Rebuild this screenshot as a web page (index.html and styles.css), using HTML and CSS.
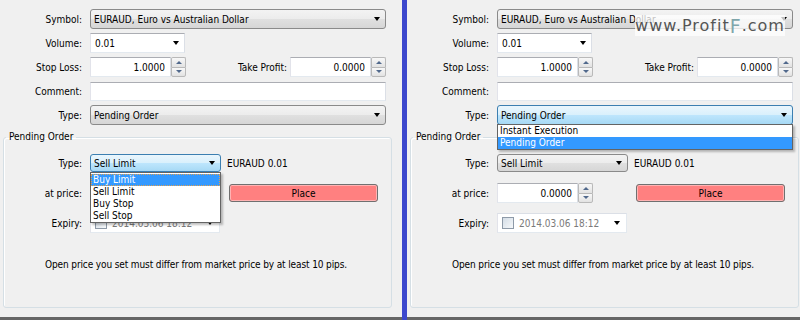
FILE: index.html
```html
<!DOCTYPE html>
<html lang="en">
<head>
    <meta charset="UTF-8">
    <title>Order</title>
    <link rel="stylesheet" href="styles.css">
</head>
<body>
    <div class="screen">
        <!-- left: pending order type list open -->
        <div class="panel panel-left">
            <div class="form">
                <div class="row">
                    <span class="label">Symbol:</span>
                    <div class="combo wide">EURAUD, Euro vs Australian Dollar<i class="arrow"></i></div>
                </div>
                <div class="row">
                    <span class="label">Volume:</span>
                    <div class="combo combo-edit">0.01<i class="arrow"></i></div>
                </div>
                <div class="row">
                    <span class="label">Stop Loss:</span>
                    <div class="spin">
                        <div class="input num">1.0000</div>
                        <div class="spinner"><span class="up"></span><span class="down"></span></div>
                    </div>
                    <span class="tp">Take Profit:</span>
                    <div class="spin">
                        <div class="input num">0.0000</div>
                        <div class="spinner"><span class="up"></span><span class="down"></span></div>
                    </div>
                </div>
                <div class="row">
                    <span class="label">Comment:</span>
                    <div class="input wide"></div>
                </div>
                <div class="row">
                    <span class="label">Type:</span>
                    <div class="combo wide">Pending Order<i class="arrow"></i></div>
                </div>
            </div>

            <fieldset class="group">
                <legend>Pending Order</legend>
                <div class="group-rows">
                    <div class="row">
                        <span class="label">Type:</span>
                        <div class="combo-wrap">
                            <div class="combo combo-small combo-focus">Sell Limit<i class="arrow"></i></div>
                            <div class="list list-below">
                                <div class="on focus">Buy Limit</div>
                                <div>Sell Limit</div>
                                <div>Buy Stop</div>
                                <div>Sell Stop</div>
                            </div>
                        </div>
                        <span class="info">EURAUD 0.01</span>
                    </div>
                    <div class="row">
                        <span class="label">at price:</span>
                        <div class="spin">
                            <div class="input num">0.0000</div>
                            <div class="spinner"><span class="up"></span><span class="down"></span></div>
                        </div>
                        <div class="place">Place</div>
                    </div>
                    <div class="row">
                        <span class="label">Expiry:</span>
                        <div class="date"><span class="check"></span><span class="date-text">2014.03.06 18:12</span><i class="arrow"></i></div>
                    </div>
                </div>
                <p class="note">Open price you set must differ from market price by at least 10 pips.</p>
            </fieldset>
        </div>

        <div class="divider"></div>

        <!-- right: execution type list open -->
        <div class="panel panel-right">
            <div class="form">
                <div class="row">
                    <span class="label">Symbol:</span>
                    <div class="combo wide">EURAUD, Euro vs Australian Dollar<i class="arrow"></i></div>
                </div>
                <div class="row">
                    <span class="label">Volume:</span>
                    <div class="combo combo-edit">0.01<i class="arrow"></i></div>
                </div>
                <div class="row">
                    <span class="label">Stop Loss:</span>
                    <div class="spin">
                        <div class="input num">1.0000</div>
                        <div class="spinner"><span class="up"></span><span class="down"></span></div>
                    </div>
                    <span class="tp">Take Profit:</span>
                    <div class="spin">
                        <div class="input num">0.0000</div>
                        <div class="spinner"><span class="up"></span><span class="down"></span></div>
                    </div>
                </div>
                <div class="row">
                    <span class="label">Comment:</span>
                    <div class="input wide"></div>
                </div>
                <div class="row">
                    <span class="label">Type:</span>
                    <div class="combo-wrap">
                        <div class="combo wide combo-focus">Pending Order<i class="arrow"></i></div>
                        <div class="list list-over">
                            <div>Instant Execution</div>
                            <div class="on">Pending Order</div>
                        </div>
                    </div>
                </div>
            </div>

            <fieldset class="group">
                <legend>Pending Order</legend>
                <div class="group-rows">
                    <div class="row">
                        <span class="label">Type:</span>
                        <div class="combo combo-small">Sell Limit<i class="arrow"></i></div>
                        <span class="info">EURAUD 0.01</span>
                    </div>
                    <div class="row">
                        <span class="label">at price:</span>
                        <div class="spin">
                            <div class="input num">0.0000</div>
                            <div class="spinner"><span class="up"></span><span class="down"></span></div>
                        </div>
                        <div class="place">Place</div>
                    </div>
                    <div class="row">
                        <span class="label">Expiry:</span>
                        <div class="date"><span class="check"></span><span class="date-text">2014.03.06 18:12</span><i class="arrow"></i></div>
                    </div>
                </div>
                <p class="note">Open price you set must differ from market price by at least 10 pips.</p>
            </fieldset>
        </div>

        <div class="watermark">www.Profit<span class="mark-f">F</span>.com</div>
    </div>
</body>
</html>
```

FILE: styles.css
```css
* {
    margin: 0;
    padding: 0;
    box-sizing: border-box;
}

body {
    width: 800px;
    height: 320px;
    overflow: hidden;
    background: #f0f0f0;
    font-family: "DejaVu Sans Condensed", "Liberation Sans", sans-serif;
    font-size: 10px;
    color: #000;
}

.screen {
    display: flex;
    height: 320px;
    position: relative;
}

.panel {
    height: 320px;
    border-bottom: 3px solid #666;
}

.panel-left {
    width: 402px;
}

.panel-right {
    flex: 1;
}

.divider {
    width: 5px;
    background: #3c48cd;
}

.form {
    display: flex;
    flex-direction: column;
    gap: 4px;
    padding-top: 9px;
    width: 386px;
}

.row {
    display: flex;
    align-items: center;
    height: 20px;
}

.label {
    width: 82px;
    margin-right: 8px;
    text-align: right;
}

.group .label {
    width: 78px;
}

.wide {
    width: 296px;
}

/* combo boxes */
.combo {
    display: flex;
    align-items: center;
    justify-content: space-between;
    height: 20px;
    padding: 0 5px 0 3px;
    border: 1px solid #8a8a8a;
    border-radius: 3px;
    background: linear-gradient(#f3f3f3 0%, #ececec 50%, #e0e0e0 50%, #d6d6d6 100%);
    white-space: nowrap;
}

.combo-edit {
    width: 95px;
    padding-left: 4px;
    background: #fff;
    border-radius: 0;
    border-color: #abadb3 #dbdfe6 #e3e9ef #e2e3ea;
}

.combo-small {
    width: 131px;
    height: 18px;
}

.combo-focus {
    border-color: #3c7fb1;
    background: linear-gradient(#eaf6fd 0%, #d9f0fc 50%, #bee6fd 50%, #a7d9f5 100%);
}

.arrow {
    width: 1px;
    height: 0;
    border-top: 4px solid #000;
    border-left: 3px solid transparent;
    border-right: 3px solid transparent;
}

.combo-wrap {
    position: relative;
}

.list {
    position: absolute;
    left: 0;
    width: 100%;
    background: #fff;
    border: 1px solid #646464;
    box-shadow: 2px 2px 2px rgba(0,0,0,0.25);
    z-index: 2;
}

.list div {
    height: 12px;
    line-height: 12px;
    padding-left: 2px;
    color: #000;
}

.list .on {
    background: #3399ff;
    color: #fff;
}

.list .focus {
    outline: 1px dotted #e0a050;
    outline-offset: -1px;
}

.list-below {
    top: 100%;
    padding-top: 1px;
}

.list-over {
    top: calc(100% - 1px);
}

/* inputs */
.input {
    display: flex;
    align-items: center;
    height: 20px;
    background: #fff;
    border: 1px solid;
    border-color: #abadb3 #dbdfe6 #e3e9ef #e2e3ea;
}

.input.wide {
    height: 19px;
}

.num {
    width: 81px;
    justify-content: flex-end;
    padding-right: 5px;
}

.spin {
    display: flex;
    height: 20px;
}

.spinner {
    width: 15px;
    display: flex;
    flex-direction: column;
}

.spinner span {
    flex: 1;
    display: flex;
    align-items: center;
    justify-content: center;
    border: 1px solid #b9b9b9;
    background: linear-gradient(#f8f8f8, #e2e2e2);
}

.spinner .up {
    border-bottom: none;
    border-radius: 2px 2px 0 0;
}

.spinner .down {
    border-radius: 0 0 2px 2px;
}

.spinner span::before {
    content: "";
    border-left: 3px solid transparent;
    border-right: 3px solid transparent;
}

.spinner .up::before {
    border-bottom: 3px solid #51698c;
}

.spinner .down::before {
    border-top: 3px solid #51698c;
}

.tp {
    margin-left: auto;
    margin-right: 3px;
}

/* pending order group */
.group {
    margin: 6px 0 0 3px;
    width: 389px;
    border: 1px solid #d5dfe5;
    border-radius: 3px;
    padding: 10px 0 36px 0;
    box-shadow: inset 1px 1px 0 #fff;
}

.group legend {
    margin-left: 2px;
    padding: 0 3px;
    line-height: 12px;
}

.group-rows {
    display: flex;
    flex-direction: column;
    gap: 10px;
}

.info {
    margin-left: 6px;
}

.place {
    display: flex;
    align-items: center;
    justify-content: center;
    width: 149px;
    height: 18px;
    margin-left: 43px;
    background: #ff8080;
    border: 1px solid #707070;
    border-radius: 3px;
    box-shadow: inset 0 0 0 1px #ffb3b3;
}

.date {
    display: flex;
    align-items: center;
    width: 130px;
    height: 20px;
    padding: 0 6px 0 4px;
    background: #fff;
    border: 1px solid;
    border-color: #dbdfe6 #e3e9ef #e3e9ef #e2e3ea;
}

.check {
    width: 12px;
    height: 12px;
    margin-right: 5px;
    border: 1px solid #8e9aa8;
    background: linear-gradient(135deg, #d4dde6, #f6f8fa);
}

.date-text {
    flex: 1;
    color: #7a7a7a;
}

.note {
    margin-top: 26px;
    padding-left: 41px;
    line-height: 12px;
    letter-spacing: -0.12px;
}

.watermark {
    position: absolute;
    left: 635px;
    top: 15px;
    width: 150px;
    height: 21px;
    display: flex;
    align-items: center;
    justify-content: center;
    background: rgba(255,255,255,0.75);
    font-family: "DejaVu Sans", sans-serif;
    font-size: 16px;
    letter-spacing: 1px;
    color: #555;
}

.mark-f {
    font-size: 19px;
    color: #7fa6ab;
}
```
